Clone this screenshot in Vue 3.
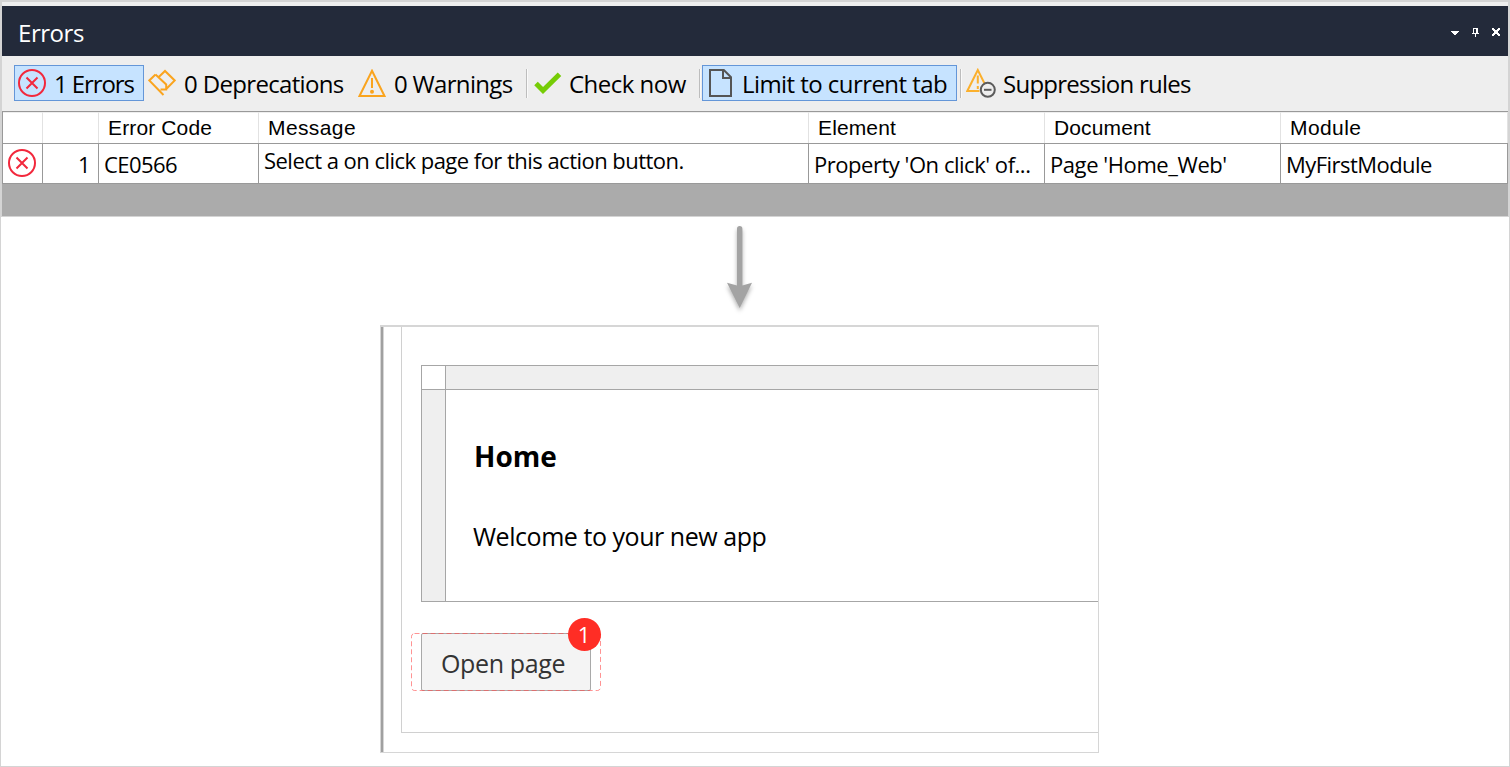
<script setup>
const columns = ['', '', 'Error Code', 'Message', 'Element', 'Document', 'Module']
</script>

<template>
  <main class="page">
    <section class="panel">
      <header class="titlebar">
        <h1>Errors</h1>
        <svg class="controls" width="52" height="14" viewBox="0 0 52 14" shape-rendering="crispEdges">
          <path d="M1 5h8v1h-1v1h-1v1h-1v1h-2v-1h-1v-1h-1v-1h-1z" fill="#fff" />
          <path d="M23 2h5v5h1v1h-3v3h-1v-3h-3v-1h1zM24 3v4h2v-4z" fill="#fff" fill-rule="evenodd" />
          <path d="M42 2h2v1h1v1h2v-1h1v-1h2v2h-1v1h-1v2h1v1h1v2h-2v-1h-1v-1h-2v1h-1v1h-2v-2h1v-1h1v-2h-1v-1h-1z" fill="#fff" />
        </svg>
      </header>

      <nav class="toolbar">
        <button class="tool active errors">
          <svg width="28" height="28" viewBox="0 0 28 28" fill="none" stroke="#f2283c" stroke-width="2">
            <circle cx="14" cy="14" r="13" /><path d="M8.5 8.5l11 11m0-11l-11 11" />
          </svg>
          <span>1 Errors</span>
        </button>
        <button class="tool deprecations">
          <svg width="28" height="28" viewBox="0 0 28 28" fill="none" stroke="#faa41e" stroke-width="2">
            <path d="M7.5 5.5L1.3 11.5 15.5 26M7.5 5.5L18.2 15.5V20.5H12.5M10.5 8.2L17 2 26.7 11.5 18 20.3" />
          </svg>
          <span>0 Deprecations</span>
        </button>
        <button class="tool warnings">
          <svg width="28" height="28" viewBox="0 0 28 28" fill="none" stroke="#faa41e" stroke-width="2">
            <path d="M14 1.8L26.5 27H1.5zM14 9v10" /><circle cx="14" cy="22.8" r="2" fill="#faa41e" stroke="none" />
          </svg>
          <span>0 Warnings</span>
        </button>
        <i class="sep"></i>
        <button class="tool check">
          <svg width="28" height="22" viewBox="0 0 28 22" fill="none" stroke="#76cc06" stroke-width="5">
            <path d="M2 11.5l7 7L25.5 2.3" />
          </svg>
          <span>Check now</span>
        </button>
        <i class="sep second"></i>
        <button class="tool active limit">
          <svg width="24" height="28" viewBox="0 0 24 28" fill="none" stroke="#555" stroke-width="2">
            <path d="M1 1h13.8L22 8.2V27H1zM14 1v8h8" />
          </svg>
          <span>Limit to current tab</span>
        </button>
        <i class="sep third"></i>
        <button class="tool rules">
          <svg width="32" height="30" viewBox="0 0 32 30" fill="none" stroke="#fbb02d" stroke-width="2">
            <path d="M13.5 23H1.3L11.8 2l6.5 13M11.8 7.5v8M11.8 18v3" />
            <circle cx="21.8" cy="21.8" r="7" stroke="#5b5b5b" /><path d="M18 21.8h7.5" stroke="#5b5b5b" />
          </svg>
          <span>Suppression rules</span>
        </button>
      </nav>

      <div class="grid head">
        <div v-for="(name, i) in columns" :key="i" class="cell"><span :class="'h' + i">{{ name }}</span></div>
      </div>
      <div class="grid row">
        <div class="cell mark">
          <svg width="28" height="28" viewBox="0 0 28 28" fill="none" stroke="#f2283c" stroke-width="2">
            <circle cx="14" cy="14" r="13" /><path d="M8.5 8.5l11 11m0-11l-11 11" />
          </svg>
        </div>
        <div class="cell number"><span>1</span></div>
        <div class="cell"><span>CE0566</span></div>
        <div class="cell message"><span>Select a on click page for this action button.</span></div>
        <div class="cell element"><span>Property 'On click' of...</span></div>
        <div class="cell document"><span>Page 'Home_Web'</span></div>
        <div class="cell"><span>MyFirstModule</span></div>
      </div>
      <div class="filler"></div>
    </section>

    <svg class="arrow" width="48" height="100" viewBox="0 0 48 100">
      <path d="M22 11.7a2.7 2.7 0 0 1 5.4 0V68.5L37 65.8 24.7 91 12 65.8 22 68.5z" fill="#a3a3a3" />
    </svg>

    <section class="editor">
      <div class="canvas">
        <div class="layout">
          <div class="corner"></div>
          <div class="strip"></div>
          <div class="strip side"></div>
          <div class="content">
            <h2>Home</h2>
            <p>Welcome to your new app</p>
          </div>
        </div>
        <div class="selection">
          <div class="open"><span>Open page</span></div>
          <svg class="outline" width="190" height="58" viewBox="0 0 190 58">
            <rect x=".5" y=".5" width="189" height="57" rx="3" fill="none" stroke="#ff4b4b" stroke-opacity=".6" stroke-dasharray="5 3" />
          </svg>
          <b class="badge">1</b>
        </div>
      </div>
    </section>
  </main>
</template>

<style>
body { margin: 0; background: #fff; }
</style>

<style scoped>
* { box-sizing: border-box; }
.page { width: 1510px; height: 767px; border: 1px solid #d4d4d4; background: #fff; overflow: hidden; font-family: "Open Sans", "Noto Sans", sans-serif; color: #000; display: flex; flex-direction: column; }
span, h1 { white-space: nowrap; }
.panel { height: 216px; border: 1px solid #d4d4d4; background: #eee; display: flex; flex-direction: column; flex: none; }
.titlebar { margin-top: 4px; height: 50px; background: #232a3a; display: flex; align-items: center; justify-content: space-between; padding: 0 6px 0 16px; flex: none; }
h1 { margin: 4px 0 0; color: #fff; font-size: 24px; font-weight: 400; line-height: 32px; letter-spacing: -.45px; }
.controls { margin-top: 3px; }
.toolbar { height: 55px; display: flex; align-items: flex-start; padding: 9px 0 0 12px; flex: none; }
.tool { all: unset; box-sizing: border-box; height: 36px; display: flex; align-items: center; border: 1px solid transparent; font-size: 24px; line-height: 34px; flex: none; }
.tool svg { flex: none; }
.tool span { margin-top: 2px; }
.active { background: #c6e3ff; border-color: #6496d8; }
.errors { width: 130px; padding-left: 3px; letter-spacing: -1.1px; }
.errors span { margin-left: 8px; }
.deprecations { width: 210px; padding-left: 3px; letter-spacing: -.66px; }
.deprecations span { margin-left: 8px; }
.warnings { width: 172px; padding-left: 3px; letter-spacing: -.68px; }
.warnings span { margin-left: 8px; }
.sep { width: 2px; height: 29px; margin-top: 4px; border-left: 1px solid #bdbdbd; border-right: 1px solid #fafafa; flex: none; }
.check { width: 171px; padding-left: 5px; letter-spacing: -.52px; }
.check span { margin-left: 7px; }
.second { margin-right: 1px; }
.limit { width: 255px; padding-left: 6px; letter-spacing: -.56px; }
.limit span { margin-left: 9px; }
.third { margin-left: 3px; }
.rules { width: 240px; padding-left: 3px; letter-spacing: -.74px; }
.rules span { margin-left: 5px; }
.grid { display: grid; grid-template-columns: 40px 56px 160px 550px 236px 236px 227px; background: #fff; flex: none; }
.head { height: 33px; border-top: 1px solid #999; border-bottom: 1px solid #999; border-left: 1px solid #999; font: 21px/29px "Liberation Sans", Arial, sans-serif; letter-spacing: .13px; }
.head .cell { padding-left: 9px; border-right: 1px solid #e2e2e2; border-top: 1px solid #eee; }
.head .h3, .head .h6 { letter-spacing: .4px; }
.row { height: 40px; border-left: 1px solid #999; border-bottom: 1px solid #999; font-size: 22px; line-height: 41px; letter-spacing: -.54px; }
.row .cell { padding-left: 5px; border-right: 1px solid #999; }
.row .message { line-height: 33px; letter-spacing: -.53px; }
.row .element { letter-spacing: -.47px; }
.row .document { letter-spacing: -.42px; }
.row .number { text-align: right; padding-right: 8px; }
.row .mark { padding: 5px 0 0 5px; line-height: 0; }
.filler { flex: 1; background: #ababab; }
.arrow { flex: none; margin-left: 714px; filter: drop-shadow(0 3px 2px rgba(0, 0, 0, .3)); }
.editor { flex: none; margin: 8px 0 0 379px; width: 719px; height: 428px; border: 1px solid #d6d6d6; border-top-width: 2px; padding: 0 0 19px 20px; position: relative; }
.editor::before { content: ""; position: absolute; left: 0; top: 0; bottom: 0; width: 3px; background: linear-gradient(90deg, #a0a0a0 2px, #d6d6d6 2px); }
.canvas { height: 406px; border-left: 1px solid #d0d0d0; border-bottom: 1px solid #d0d0d0; padding: 38px 0 0 9px; }
.layout { margin-left: 10px; height: 237px; display: grid; grid-template: 24px 1fr / 24px 1fr; border: 1px solid #a6a6a6; border-right: 0; }
.corner { border-right: 1px solid #a6a6a6; border-bottom: 1px solid #a6a6a6; }
.strip { background: #efefef; border-bottom: 1px solid #a6a6a6; }
.side { border-bottom: 0; border-right: 1px solid #a6a6a6; }
.content { padding: 44px 0 0 28px; }
h2 { margin: 0; font-size: 28px; line-height: 44px; font-weight: 700; }
p { margin: 39px 0 0 -1px; font-size: 25px; line-height: 38px; letter-spacing: -.46px; }
.selection { margin-top: 31px; width: 190px; height: 58px; position: relative; padding-left: 10px; }
.open { width: 170px; height: 58px; border: 1px solid #a9a9a9; border-radius: 2px; background: #f4f4f4; color: #333; font-size: 25px; line-height: 58px; padding-left: 19px; letter-spacing: -.35px; }
.outline { position: absolute; left: 0; top: 0; }
.badge { position: absolute; left: 156.5px; top: -15px; width: 33px; height: 33px; border-radius: 50%; background: #ff2d25; color: #fff; font-size: 22px; font-weight: 400; line-height: 32px; text-align: center; }
</style>
